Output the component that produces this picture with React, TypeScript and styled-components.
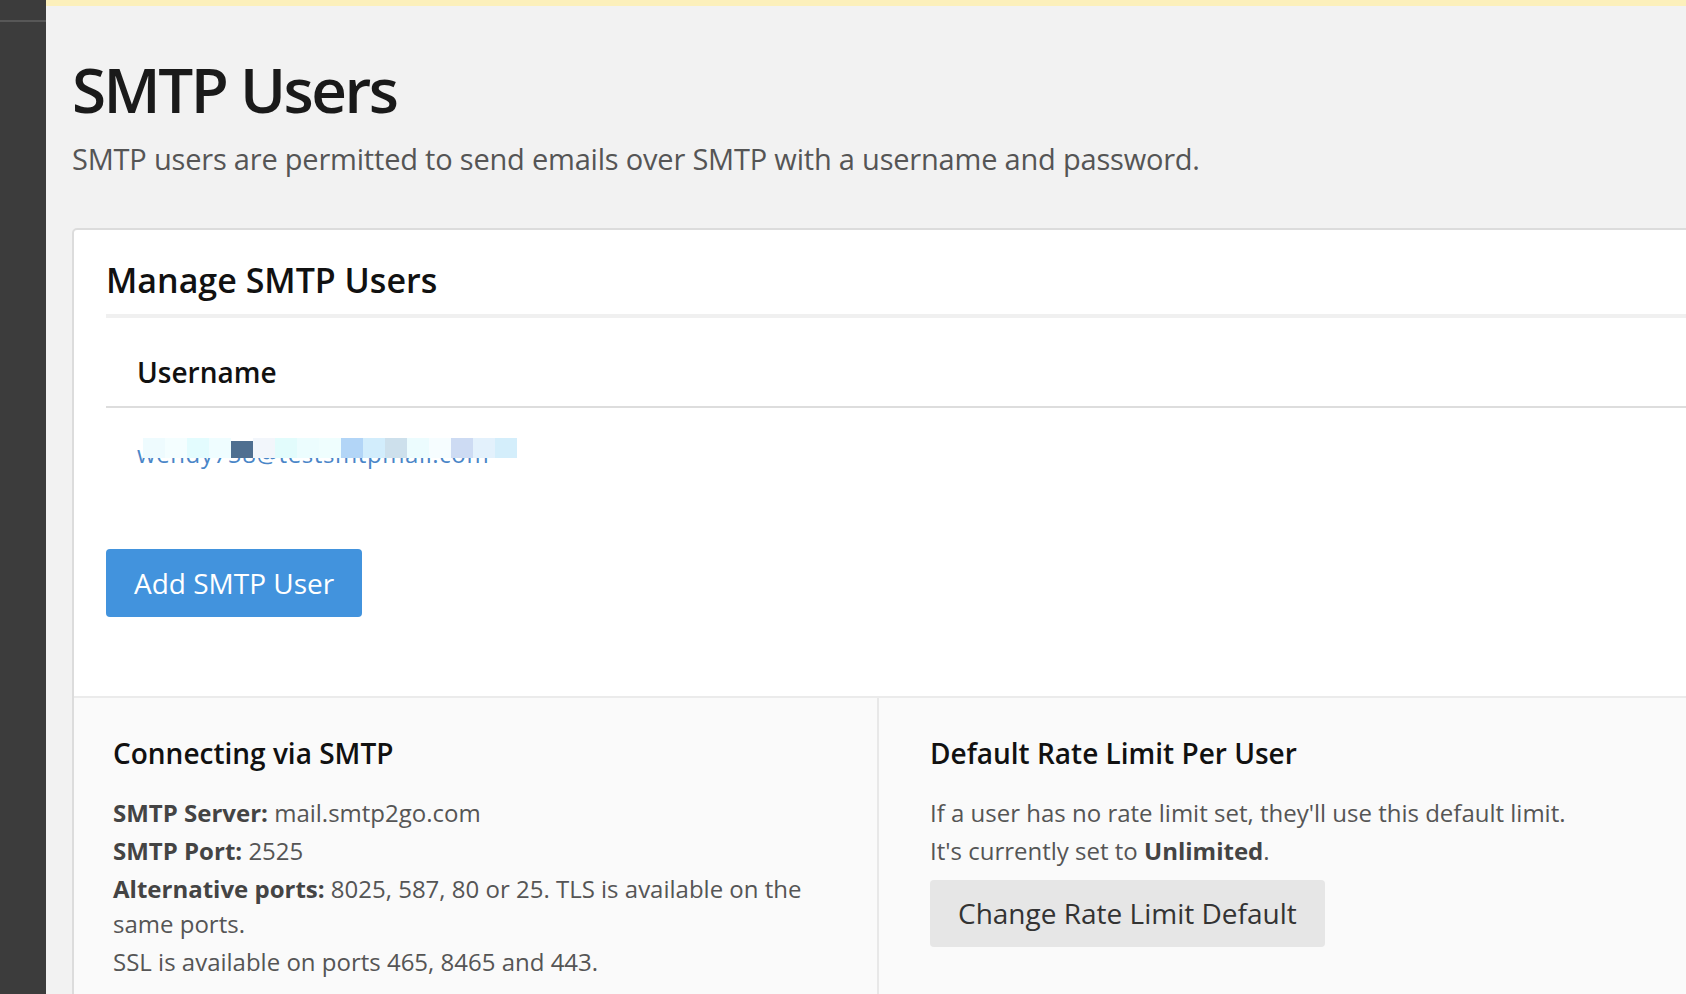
import React from "react";
import styled, { createGlobalStyle } from "styled-components";

const GlobalStyle = createGlobalStyle`
  html, body {
    margin: 0;
    padding: 0;
    height: 100%;
    overflow: hidden;
    background: #f2f2f2;
    font-family: "Open Sans", "Noto Sans", "Liberation Sans", sans-serif;
  }
  * { box-sizing: border-box; }
`;

const Shell = styled.div`
  display: flex;
  height: 994px;
  overflow: hidden;
`;

const Sidebar = styled.aside`
  width: 46px;
  flex: 0 0 46px;
  background: #3c3c3c;
`;

const SidebarTop = styled.div`
  height: 22px;
  border-bottom: 2px solid #575757;
`;

const Main = styled.main`
  flex: 1;
  min-width: 0;
  display: flex;
  flex-direction: column;
  overflow: hidden;
`;

const Banner = styled.div`
  height: 6px;
  flex: 0 0 6px;
  background: #fcf0bb;
`;

const Content = styled.div`
  padding: 48px 0 0 26px;
`;

const Title = styled.h1`
  margin: 0;
  font-size: 62px;
  line-height: 70px;
  font-weight: 600;
  letter-spacing: -2.5px;
  color: #1a1a1a;
`;

const Subtitle = styled.p`
  margin: 15px 0 0;
  font-size: 29px;
  line-height: 40px;
  letter-spacing: -0.2px;
  color: #555;
  white-space: nowrap;
`;

const Card = styled.section`
  margin-top: 49px;
  width: 1700px;
  background: #fff;
  border: 2px solid #dcdcdc;
  border-radius: 5px;
  overflow: hidden;
`;

const CardBody = styled.div`
  padding: 28px 0 79px 32px;
`;

const CardTitle = styled.h2`
  margin: 0;
  font-size: 34px;
  line-height: 44px;
  font-weight: 600;
  color: #111;
  padding-bottom: 12px;
  border-bottom: 4px solid #f0f0f0;
`;

const Table = styled.table`
  width: 100%;
  border-collapse: collapse;
`;

const HeadCell = styled.th`
  text-align: left;
  font-size: 28px;
  line-height: 38px;
  font-weight: 600;
  color: #111;
  padding: 35px 0 15px 31px;
  border-bottom: 2px solid #dddddd;
`;

const Cell = styled.td`
  padding: 29px 0 13px 31px;
  font-size: 24px;
  line-height: 34px;
`;

const UserLink = styled.a`
  position: relative;
  display: inline-block;
  color: #4a86c8;
  text-decoration: none;
  letter-spacing: 0.6px;
`;

const Mosaic = styled.span`
  position: absolute;
  left: 6px;
  top: 1px;
  display: flex;
  height: 20px;
`;

const Tile = styled.span<{ $c: string; $dark?: boolean }>`
  width: 22px;
  height: ${(p) => (p.$dark ? "17px" : "20px")};
  margin-top: ${(p) => (p.$dark ? "3px" : "0")};
  background: ${(p) => p.$c};
`;

const PrimaryButton = styled.button`
  margin-top: 65px;
  font-family: inherit;
  font-size: 28px;
  line-height: 38px;
  padding: 15px 28px;
  color: #fff;
  background: #4293dd;
  border: none;
  border-radius: 4px;
  cursor: pointer;
`;

const Footer = styled.div`
  display: grid;
  grid-template-columns: 803px 1fr;
  background: #fafafa;
  border-top: 2px solid #ebebeb;
`;

const FooterCol = styled.div<{ $pad: number; $divider?: boolean }>`
  padding: 37px 0 40px ${(p) => p.$pad}px;
  border-left: ${(p) => (p.$divider ? "2px solid #e8e8e8" : "none")};
`;

const FooterTitle = styled.h3`
  margin: 0 0 24px;
  font-size: 28px;
  line-height: 36px;
  font-weight: 600;
  color: #111;
`;

const Para = styled.p<{ $maxWidth?: number }>`
  margin: 0 0 3px;
  font-size: 24px;
  line-height: 35px;
  color: #555;
  max-width: ${(p) => (p.$maxWidth ? `${p.$maxWidth}px` : "none")};
`;

const Strong = styled.strong`
  font-weight: 700;
  color: #444;
`;

const SecondaryButton = styled.button`
  margin-top: 9px;
  font-family: inherit;
  font-size: 28px;
  line-height: 37px;
  padding: 15px 28px;
  color: #333;
  background: #e6e6e6;
  border: none;
  border-radius: 4px;
  cursor: pointer;
`;

const tiles = [
  "#eefbfe", "#f4feff", "#e3fcfe", "#effdff", "#4f6f90", "#f2f6fb",
  "#e2fcfc", "#ecfdfe", "#effefe", "#b2d5f7", "#d2edfc", "#cde0ec",
  "#ecfcfe", "#f6fdff", "#cddbf3", "#e3f1fc", "#d4eefb",
];

export default function App() {
  return (
    <>
      <GlobalStyle />
      <Shell>
        <Sidebar>
          <SidebarTop />
        </Sidebar>
        <Main>
          <Banner />
          <Content>
            <Title>SMTP Users</Title>
            <Subtitle>
              SMTP users are permitted to send emails over SMTP with a username and password.
            </Subtitle>
            <Card>
              <CardBody>
                <CardTitle>Manage SMTP Users</CardTitle>
                <Table>
                  <thead>
                    <tr>
                      <HeadCell>Username</HeadCell>
                    </tr>
                  </thead>
                  <tbody>
                    <tr>
                      <Cell>
                        <UserLink href="#">
                          wendy758@testsmtpmail.com
                          <Mosaic aria-hidden="true">
                            {tiles.map((c, i) => (
                              <Tile key={i} $c={c} $dark={i === 4} />
                            ))}
                          </Mosaic>
                        </UserLink>
                      </Cell>
                    </tr>
                  </tbody>
                </Table>
                <PrimaryButton>Add SMTP User</PrimaryButton>
              </CardBody>
              <Footer>
                <FooterCol $pad={39}>
                  <FooterTitle>Connecting via SMTP</FooterTitle>
                  <Para>
                    <Strong>SMTP Server:</Strong> mail.smtp2go.com
                  </Para>
                  <Para>
                    <Strong>SMTP Port:</Strong> 2525
                  </Para>
                  <Para $maxWidth={720}>
                    <Strong>Alternative ports:</Strong> 8025, 587, 80 or 25. TLS is available on the same ports.
                  </Para>
                  <Para>SSL is available on ports 465, 8465 and 443.</Para>
                </FooterCol>
                <FooterCol $pad={51} $divider>
                  <FooterTitle>Default Rate Limit Per User</FooterTitle>
                  <Para>If a user has no rate limit set, they'll use this default limit.</Para>
                  <Para>
                    It's currently set to <Strong>Unlimited</Strong>.
                  </Para>
                  <SecondaryButton>Change Rate Limit Default</SecondaryButton>
                </FooterCol>
              </Footer>
            </Card>
          </Content>
        </Main>
      </Shell>
    </>
  );
}
